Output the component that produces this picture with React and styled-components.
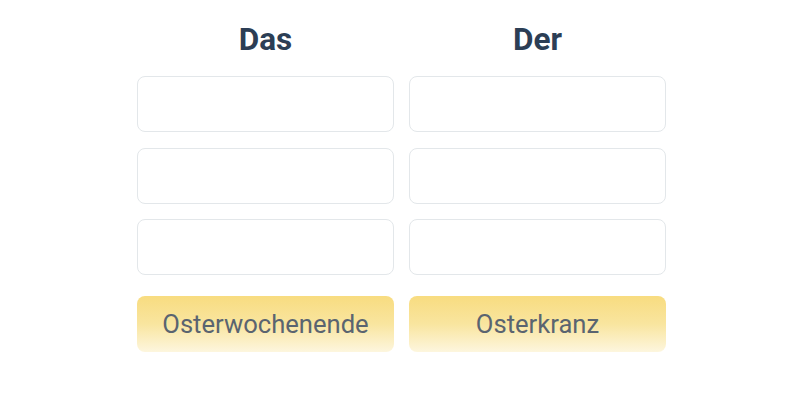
import React from "react";
import styled, { createGlobalStyle } from "styled-components";

const Global = createGlobalStyle`
  html, body { margin: 0; padding: 0; background: #ffffff; }
  body { font-family: Roboto, "Noto Sans", sans-serif; }
`;

const Page = styled.div`
  width: 800px;
  height: 400px;
  display: flex;
  justify-content: center;
  padding-top: 22px;
  box-sizing: border-box;
`;

const Grid = styled.div`
  display: grid;
  grid-template-columns: 257px 257px;
  column-gap: 15px;
  margin-left: 3px;
`;

const Column = styled.div`
  display: flex;
  flex-direction: column;
`;

const Heading = styled.h2`
  margin: 0 0 18px;
  height: 36px;
  line-height: 36px;
  text-align: center;
  font-size: 31.5px;
  font-weight: 700;
  color: #2c3e55;
`;

const Slot = styled.div`
  height: 56px;
  box-sizing: border-box;
  border: 1.5px solid #e3e7ea;
  border-radius: 8px;
  background: #fff;
  margin-bottom: ${(p) => (p.$last ? "21px" : "15.5px")};
`;

const Word = styled.div`
  height: 56px;
  border-radius: 8px;
  background: linear-gradient(to bottom, #f8dc80 0%, #f9e59f 50%, #fdf6de 100%);
  display: flex;
  align-items: center;
  justify-content: center;
  font-size: 25.6px;
  color: #5a6470;
`;

const columns = [
  { title: "Das", word: "Osterwochenende" },
  { title: "Der", word: "Osterkranz" },
];

export default function App() {
  return (
    <>
      <Global />
      <Page>
        <Grid>
          {columns.map((c) => (
            <Column key={c.title}>
              <Heading>{c.title}</Heading>
              <Slot />
              <Slot />
              <Slot $last />
              <Word>{c.word}</Word>
            </Column>
          ))}
        </Grid>
      </Page>
    </>
  );
}
